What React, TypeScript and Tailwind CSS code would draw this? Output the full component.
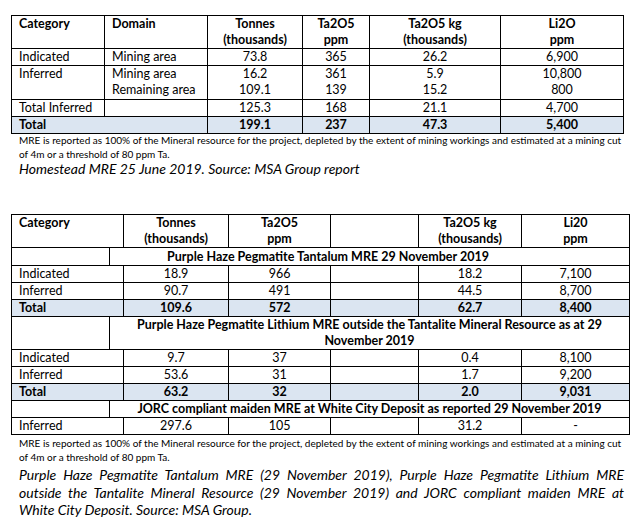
import React from "react";

const td = "border border-black px-[7px] py-0 align-middle";
const c = td + " text-center";
const l = td + " text-left";
const blue = "bg-[#dbe5f1]";

function Note({ className }: { className: string }) {
  return (
    <p className={"pl-[8px] w-[631px] text-[10px] leading-[14px] whitespace-nowrap " + className}>
      MRE is reported as 100% of the Mineral resource for the project, depleted by the extent of mining workings and estimated at a mining cut
      <br />
      of 4m or a threshold of 80 ppm Ta.
    </p>
  );
}

export default function App() {
  return (
    <div className="w-[642px] h-[522px] bg-white text-black font-['Lato',sans-serif] overflow-hidden">
      <div className="pl-[11px] pt-[15px]">
        <table className="table-fixed border-collapse w-[612px] text-[12.5px] leading-[16px]">
          <colgroup>
            <col className="w-[93px]" />
            <col className="w-[103px]" />
            <col className="w-[95px]" />
            <col className="w-[67px]" />
            <col className="w-[131px]" />
            <col className="w-[123px]" />
          </colgroup>
          <tbody>
            <tr className="h-[33px] font-bold">
              <td className={l + " align-top"}>Category</td>
              <td className={l + " align-top"}>Domain</td>
              <td className={c + " align-top"}>Tonnes<br />(thousands)</td>
              <td className={c + " align-top"}>Ta2O5<br />ppm</td>
              <td className={c + " align-top"}>Ta2O5 kg<br />(thousands)</td>
              <td className={c + " align-top"}>Li2O<br />ppm</td>
            </tr>
            <tr className="h-[16px]">
              <td className={l}>Indicated</td>
              <td className={l}>Mining area</td>
              <td className={c}>73.8</td>
              <td className={c}>365</td>
              <td className={c}>26.2</td>
              <td className={c}>6,900</td>
            </tr>
            <tr className="h-[34px]">
              <td className={l + " align-top"}>Inferred</td>
              <td className={l + " align-top"}>Mining area<br />Remaining area</td>
              <td className={c + " align-top"}>16.2<br />109.1</td>
              <td className={c + " align-top"}>361<br />139</td>
              <td className={c + " align-top"}>5.9<br />15.2</td>
              <td className={c + " align-top"}>10,800<br />800</td>
            </tr>
            <tr className="h-[17px]">
              <td className={l}>Total Inferred</td>
              <td className={l}></td>
              <td className={c}>125.3</td>
              <td className={c}>168</td>
              <td className={c}>21.1</td>
              <td className={c}>4,700</td>
            </tr>
            <tr className={"h-[17px] font-bold " + blue}>
              <td className={l} colSpan={2}>Total</td>
              <td className={c}>199.1</td>
              <td className={c}>237</td>
              <td className={c}>47.3</td>
              <td className={c}>5,400</td>
            </tr>
          </tbody>
        </table>
        <Note className="mt-[-1px]" />
        <p className="pl-[8px] italic text-[14px] leading-[17px] mt-[-1px]">
          Homestead MRE 25 June 2019. Source: MSA Group report
        </p>

        <table className="mt-[37px] table-fixed border-collapse w-[618px] text-[12.5px] leading-[16px]">
          <colgroup>
            <col className="w-[98px]" />
            <col className="w-[14px]" />
            <col className="w-[105px]" />
            <col className="w-[102px]" />
            <col className="w-[88px]" />
            <col className="w-[103px]" />
            <col className="w-[108px]" />
          </colgroup>
          <tbody>
            <tr className="h-[33px] font-bold">
              <td className={l + " align-top"} colSpan={2}>Category</td>
              <td className={c + " align-top"}>Tonnes<br />(thousands)</td>
              <td className={c + " align-top"}>Ta2O5<br />ppm</td>
              <td className={c}></td>
              <td className={c + " align-top"}>Ta2O5 kg<br />(thousands)</td>
              <td className={c + " align-top"}>Li20<br />ppm</td>
            </tr>
            <tr className="h-[18px] font-bold">
              <td className={l}></td>
              <td className={c + " pr-[90px]"} colSpan={6}>Purple Haze Pegmatite Tantalum MRE 29 November 2019</td>
            </tr>
            <tr className="h-[17px]">
              <td className={l} colSpan={2}>Indicated</td>
              <td className={c}>18.9</td>
              <td className={c}>966</td>
              <td className={c}></td>
              <td className={c}>18.2</td>
              <td className={c}>7,100</td>
            </tr>
            <tr className="h-[17px]">
              <td className={l} colSpan={2}>Inferred</td>
              <td className={c}>90.7</td>
              <td className={c}>491</td>
              <td className={c}></td>
              <td className={c}>44.5</td>
              <td className={c}>8,700</td>
            </tr>
            <tr className={"h-[16px] font-bold " + blue}>
              <td className={l} colSpan={2}>Total</td>
              <td className={c}>109.6</td>
              <td className={c}>572</td>
              <td className={c}></td>
              <td className={c}>62.7</td>
              <td className={c}>8,400</td>
            </tr>
            <tr className="h-[33px] font-bold">
              <td className={l}></td>
              <td className={c + " align-top px-[20px]"} colSpan={6}>Purple Haze Pegmatite Lithium MRE outside the Tantalite Mineral Resource as at 29 November 2019</td>
            </tr>
            <tr className="h-[17px]">
              <td className={l} colSpan={2}>Indicated</td>
              <td className={c}>9.7</td>
              <td className={c}>37</td>
              <td className={c}></td>
              <td className={c}>0.4</td>
              <td className={c}>8,100</td>
            </tr>
            <tr className="h-[17px]">
              <td className={l} colSpan={2}>Inferred</td>
              <td className={c}>53.6</td>
              <td className={c}>31</td>
              <td className={c}></td>
              <td className={c}>1.7</td>
              <td className={c}>9,200</td>
            </tr>
            <tr className={"h-[17px] font-bold " + blue}>
              <td className={l} colSpan={2}>Total</td>
              <td className={c}>63.2</td>
              <td className={c}>32</td>
              <td className={c}></td>
              <td className={c}>2.0</td>
              <td className={c}>9,031</td>
            </tr>
            <tr className="h-[17px] font-bold">
              <td className={l}></td>
              <td className={c} colSpan={6}>JORC compliant maiden MRE at White City Deposit as reported 29 November 2019</td>
            </tr>
            <tr className="h-[17px]">
              <td className={l} colSpan={2}>Inferred</td>
              <td className={c}>297.6</td>
              <td className={c}>105</td>
              <td className={c}></td>
              <td className={c}>31.2</td>
              <td className={c}>-</td>
            </tr>
          </tbody>
        </table>
        <Note className="mt-[1px]" />
        <div className="pl-[8px] w-[613px] italic text-[14px] leading-[17.5px] mt-[2px]">
          <span className="block text-justify [text-align-last:justify]">Purple Haze Pegmatite Tantalum MRE (29 November 2019), Purple Haze Pegmatite Lithium MRE</span>
          <span className="block text-justify [text-align-last:justify]">outside the Tantalite Mineral Resource (29 November 2019) and JORC compliant maiden MRE at</span>
          <span className="block">White City Deposit. Source: MSA Group.</span>
        </div>
      </div>
    </div>
  );
}
